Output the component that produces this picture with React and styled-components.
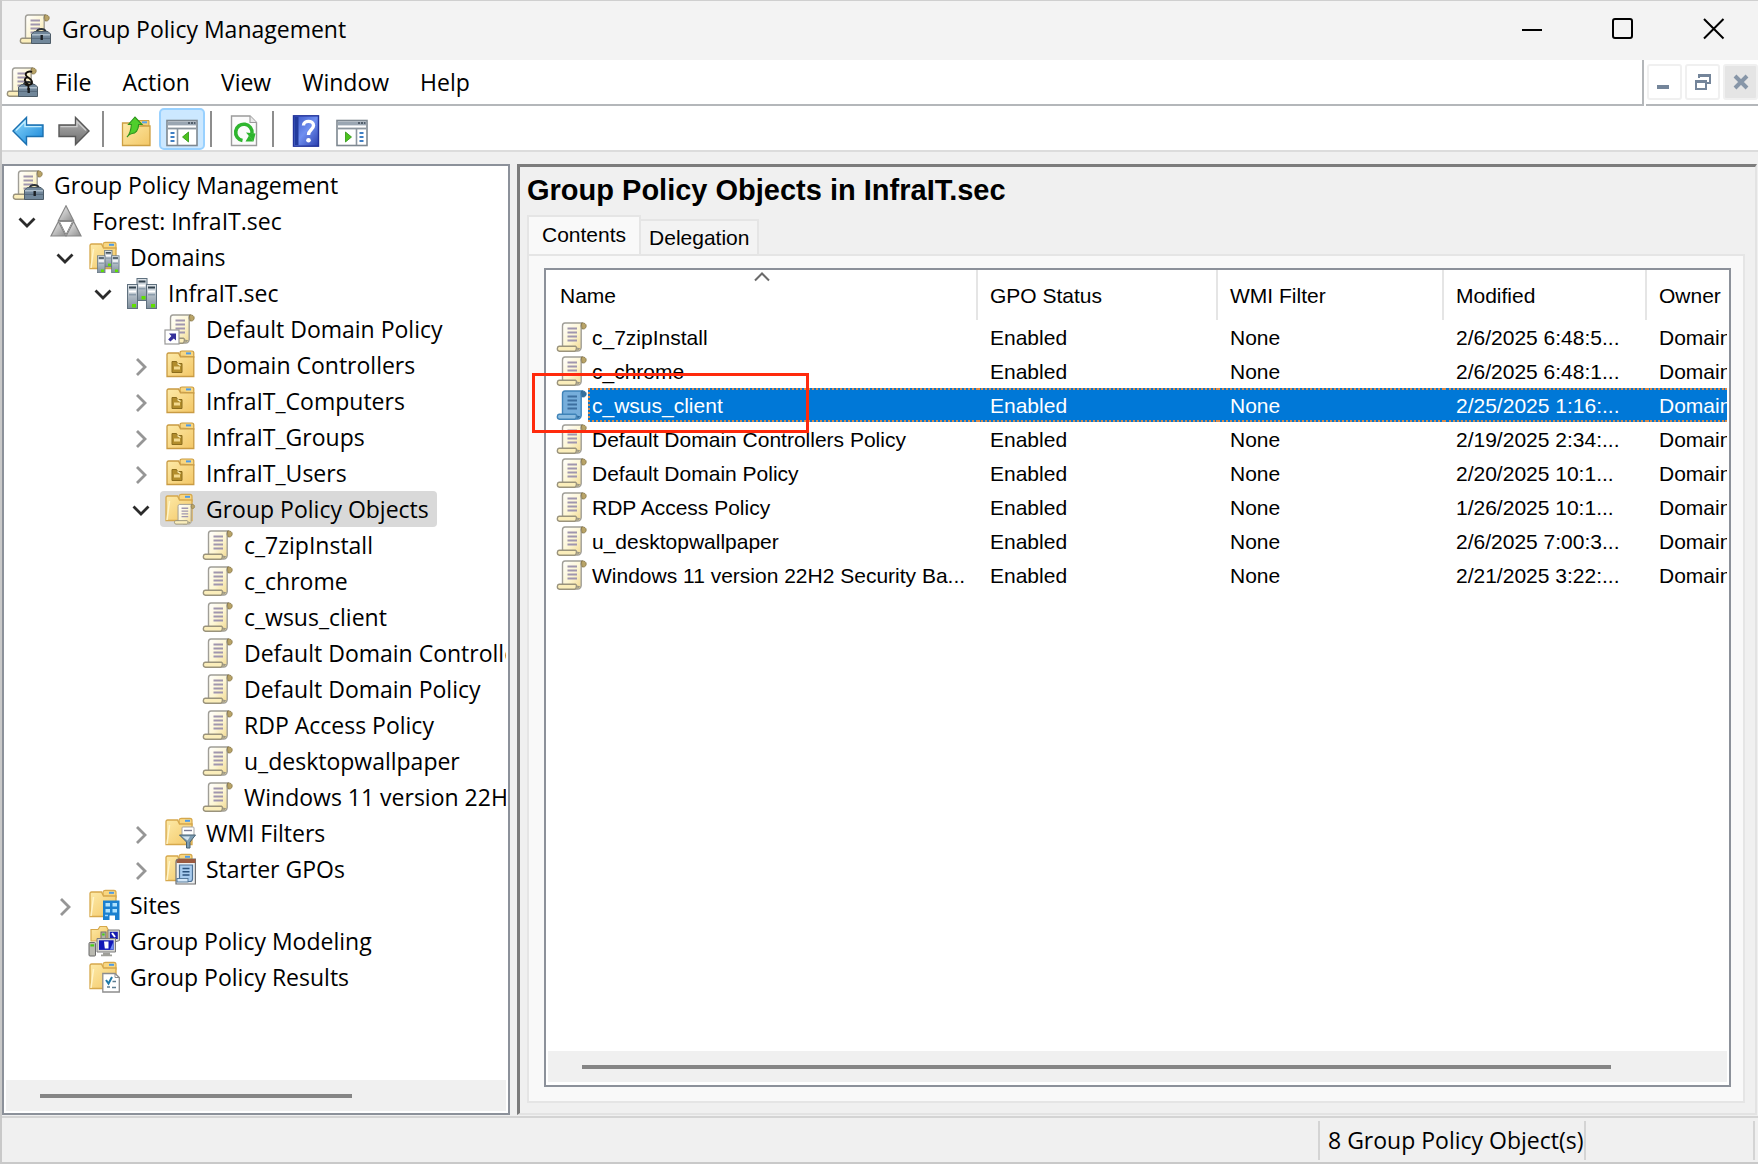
import React from "react";
import styled, { createGlobalStyle } from "styled-components";

const SEGOE = `"Open Sans", "Noto Sans", sans-serif`;
const LIST = `"Liberation Sans", Arial, sans-serif`;

const GlobalStyle = createGlobalStyle`
  *, *::before, *::after { box-sizing: border-box; }
  body { margin: 0; background: #f0f0f0; color: #000; font-family: ${SEGOE}; }
  button { margin: 0; padding: 0; border: 0; background: none; color: inherit; font: inherit; text-align: left; }
  svg { display: block; flex: none; }
`;

/* ---------- window frame ---------- */

const Window = styled.div`
  display: flex;
  flex-direction: column;
  min-height: 100vh;
  border-top: 1px solid #cfcfcf;
  border-left: 2px solid #c9c9c9;
  border-bottom: 2px solid #c9c9c9;
  background: #f0f0f0;
  font-size: 23px;
  line-height: 32px;
`;

const TitleBar = styled.header`
  display: flex;
  align-items: center;
  gap: 11px;
  height: 59px;
  padding: 0 0 3px 17px;
  background: #f3f3f3;
`;

const Title = styled.h1`
  flex: 1;
  margin: 0;
  font-size: 23px;
  font-weight: 400;
  line-height: 32px;
`;

const CaptionButton = styled.button`
  display: flex;
  align-items: center;
  justify-content: center;
  width: 80px;
  height: 56px;
`;

const CaptionGroup = styled.div`
  display: flex;
  gap: 11px;
  padding-right: 4px;
`;

const MenuRow = styled.div`
  display: flex;
  height: 46px;
  background: #fff;
`;

const MenuBar = styled.nav`
  display: flex;
  align-items: center;
  flex: 1;
  gap: 17px;
  padding-left: 4px;
  border-right: 2px solid #b4b7ba;
  border-bottom: 2px solid #b4b7ba;
`;

const MenuItems = styled.div`
  display: flex;
  gap: 31px;
`;

const MenuButton = styled.button`
  line-height: 32px;
`;

const ChildControls = styled.div`
  display: flex;
  align-items: center;
  gap: 3px;
  margin-left: 2px;
  padding-left: 1px;
  border-bottom: 2px solid #b4b7ba;
`;

const ChildButton = styled.button`
  display: flex;
  align-items: center;
  justify-content: center;
  width: 35px;
  height: 36px;
  border: 2px solid #f0f0f0;
  border-radius: 3px;
  background: ${(p) => (p.$dim ? "#e5e5e5" : "#fff")};
`;

/* ---------- toolbar ---------- */

const Toolbar = styled.div`
  display: flex;
  align-items: center;
  height: 46px;
  padding: 2px 0 0 3px;
  border-bottom: 2px solid #dcdcdc;
  background: #fff;
`;

const ToolButton = styled.button`
  display: flex;
  align-items: center;
  justify-content: center;
  width: 46px;
  height: 42px;
  padding-top: 3px;
  border: 2px solid ${(p) => (p.$on ? "#99d1ff" : "transparent")};
  border-radius: 5px;
  background: ${(p) => (p.$on ? "#cce8ff" : "transparent")};
`;

const ToolDivider = styled.span`
  width: 2px;
  height: 36px;
  margin: 0 9px 0 5px;
  background: #8d8d8d;
`;

/* ---------- main split ---------- */

const Split = styled.main`
  display: grid;
  flex: 1;
  grid-template-columns: 508px minmax(0, 1fr);
  gap: 7px;
  padding: 12px 1px 0 0;
`;

const TreePane = styled.section`
  display: flex;
  flex-direction: column;
  min-width: 0;
  padding: 1px 2px 2px;
  border: 2px solid #8c919a;
  background: #fff;
`;

const Tree = styled.ul`
  flex: 1;
  min-width: 0;
  margin: 0;
  padding: 0;
  overflow: hidden;
  list-style: none;
`;

const TreeRow = styled.li`
  display: flex;
  height: 36px;
  padding-left: ${(p) => 2 + 38 * Math.max(0, p.$level - 1)}px;
`;

const Twisty = styled.button`
  display: flex;
  align-items: center;
  justify-content: center;
  flex: none;
  width: 38px;
  height: 36px;
  padding-top: ${(p) => (p.$open ? 2 : 4)}px;
`;

const TwistySpace = styled.span`
  flex: none;
  width: 38px;
`;

const TreeItem = styled.button`
  display: flex;
  align-items: center;
  gap: 10px;
  height: 36px;
  padding: 0 8px 0 4px;
  border-radius: 4px;
  background: ${(p) => (p.$selected ? "#d9d9d9" : "transparent")};
  line-height: 32px;
  white-space: nowrap;
`;

const ScrollTrack = styled.div`
  display: flex;
  align-items: center;
  height: 31px;
  padding-left: 34px;
  background: #f0f0f0;
`;

const ScrollThumb = styled.span`
  width: ${(p) => p.$length};
  height: 4px;
  background: #858585;
`;

/* ---------- result pane ---------- */

const ResultPane = styled.section`
  display: flex;
  flex-direction: column;
  min-width: 0;
  padding: 6px 10px 10px 7px;
  border-top: 3px solid #7c7c7c;
  border-left: 3px solid #7c7c7c;
  border-right: 2px solid #e3e3e3;
  border-bottom: 2px solid #e3e3e3;
  font-family: ${LIST};
`;

const PaneHeading = styled.h2`
  margin: 0;
  font-size: 29px;
  font-weight: 700;
  line-height: 34px;
`;

const TabStrip = styled.div`
  display: flex;
  align-items: flex-end;
  height: 47px;
  padding-top: 8px;
`;

const Tab = styled.button`
  height: ${(p) => (p.$active ? 41 : 35)}px;
  margin-bottom: ${(p) => (p.$active ? -2 : 0)}px;
  padding: 0 ${(p) => (p.$active ? 13 : 8)}px ${(p) => (p.$active ? 3 : 0)}px;
  border: 2px solid #e5e5e5;
  border-bottom-width: 0;
  border-left-width: ${(p) => (p.$active ? 2 : 0)}px;
  background: ${(p) => (p.$active ? "#f9f9f9" : "#f3f3f3")};
  font-size: 21px;
  line-height: 28px;
`;

const TabPage = styled.div`
  display: flex;
  flex: 1;
  padding: 12px 12px 14px 15px;
  border: 2px solid #e5e5e5;
  background: #f9f9f9;
`;

const ListFrame = styled.div`
  position: relative;
  display: flex;
  flex: 1;
  flex-direction: column;
  min-width: 0;
  padding: 0 2px 3px 2px;
  border: 2px solid #8c919a;
  background: #fff;
`;

const ListBody = styled.div`
  flex: 1;
  overflow: hidden;
`;

const ListTable = styled.table`
  width: 100%;
  table-layout: fixed;
  border-collapse: separate;
  border-spacing: 0;
  font-size: 21px;
  line-height: 28px;
`;

const Col = styled.col`
  width: ${(p) => p.$width};
`;

const HeadCell = styled.th`
  position: relative;
  height: 50px;
  padding: 2px 0 0 12px;
  border-right: 2px solid ${(p) => (p.$last ? "transparent" : "#e5e5e5")};
  font-weight: 400;
  text-align: left;
  white-space: nowrap;
`;

const SortMark = styled.span`
  position: absolute;
  top: 1px;
  left: 50%;
  margin-left: -9px;
`;

const Cell = styled.td`
  height: 34px;
  padding: ${(p) => (p.$first ? "0 0 0 8px" : "2px 0 0 12px")};
  overflow: hidden;
  white-space: nowrap;
`;

const Row = styled.tr`
  color: ${(p) => (p.$selected ? "#fff" : "#000")};
  ${Cell}:not(:first-child) {
    background: ${(p) => (p.$selected ? "#0078d7" : "transparent")};
    border-top: ${(p) => (p.$selected ? "2px dotted #d98a4a" : "0")};
    border-bottom: ${(p) => (p.$selected ? "2px dotted #d98a4a" : "0")};
  }
`;

const NameCell = styled.div`
  display: flex;
  align-items: center;
  height: 34px;
`;

const NameLabel = styled.span`
  flex: 1;
  height: 34px;
  padding-left: 2px;
  border: 2px dotted ${(p) => (p.$selected ? "#d98a4a" : "transparent")};
  border-right: 0;
  background: ${(p) => (p.$selected ? "#0078d7" : "transparent")};
  line-height: 32px;
`;

const Callout = styled.div`
  position: absolute;
  top: 103px;
  left: -14px;
  width: 277px;
  height: 60px;
  border: 3px solid #ff2a0c;
  pointer-events: none;
`;

/* ---------- status bar ---------- */

const StatusBar = styled.footer`
  display: flex;
  justify-content: flex-end;
  height: 46px;
  margin-top: 1px;
  padding: 3px 3px 2px 0;
  border-top: 2px solid #d4d4d4;
`;

const StatusCell = styled.div`
  width: ${(p) => p.$width}px;
  padding: 3px 0 0 8px;
  border-left: ${(p) => (p.$first ? 2 : 0)}px solid #d4d4d4;
  border-right: 2px solid #d4d4d4;
  line-height: 32px;
  white-space: nowrap;
`;

/* ---------- icons ---------- */

const Defs = () => (
  <svg width="0" height="0" style={{ position: "absolute" }} aria-hidden="true">
    <defs>
      <linearGradient id="paper" x1="0" y1="0" x2="1" y2="1">
        <stop offset="0" stopColor="#ffffff" />
        <stop offset="0.5" stopColor="#fdf6d4" />
        <stop offset="1" stopColor="#f0d689" />
      </linearGradient>
      <linearGradient id="folder" x1="0" y1="0" x2="1" y2="1">
        <stop offset="0" stopColor="#fdeaa8" />
        <stop offset="1" stopColor="#f3c766" />
      </linearGradient>
      <linearGradient id="steel" x1="0" y1="0" x2="0" y2="1">
        <stop offset="0" stopColor="#dfe5ea" />
        <stop offset="1" stopColor="#7f8f9d" />
      </linearGradient>
      <linearGradient id="blueArrow" x1="0" y1="0" x2="1" y2="1">
        <stop offset="0" stopColor="#8fdcff" />
        <stop offset="1" stopColor="#1583d6" />
      </linearGradient>
      <linearGradient id="grayArrow" x1="0" y1="0" x2="0" y2="1">
        <stop offset="0" stopColor="#b5b5b5" />
        <stop offset="1" stopColor="#6c6c6c" />
      </linearGradient>
      <linearGradient id="helpBlue" x1="0" y1="0" x2="1" y2="1">
        <stop offset="0" stopColor="#3a55c4" />
        <stop offset="0.5" stopColor="#6f8ff0" />
        <stop offset="1" stopColor="#2a3fae" />
      </linearGradient>
      <linearGradient id="gray3d" x1="0" y1="0" x2="1" y2="1">
        <stop offset="0" stopColor="#f4f4f4" />
        <stop offset="1" stopColor="#8e8e8e" />
      </linearGradient>
    </defs>
  </svg>
);

const Icon = ({ children }) => (
  <svg width="32" height="32" viewBox="0 0 32 32" aria-hidden="true">
    {children}
  </svg>
);

const ScrollArt = ({ tint }) => {
  const edge = tint ? "#3f83b8" : "#a09e97";
  const fill = tint ? "#76aedb" : "url(#paper)";
  return (
    <g>
      <path d="M9 2H27C24.6 2.6 24.5 5 25.2 7V26.5C25 29 23.5 30 21.5 30H14L6.5 25V5C6.5 3 7.5 2 9 2Z" fill={fill} stroke={edge} strokeWidth="1.4" />
      <path d="M25.5 2C28.5 1.6 30.4 3 30.2 5.2C30 7.6 28 8.4 26 7.8L25.6 5Z" fill={tint ? "#35709e" : "#b9a468"} stroke={tint ? "#2d668f" : "#857545"} strokeWidth="0.8" />
      <path d="M11.5 7.5H21M11.5 11.5H21M11.5 15.5H21M11.5 19.5H21" stroke={tint ? "#3c6fa0" : "#a096ae"} strokeWidth="1.8" />
      <path d="M3 25.2H19.5C21 25.4 20.6 29.6 18.8 30.2H3.4C0.6 29.8 0.8 25.6 3 25.2Z" fill={tint ? "#8bbce0" : "#fbeebb"} stroke={tint ? "#3f83b8" : "#9a937c"} strokeWidth="1.4" />
      <path d="M21 26.4L24.6 27.4L21.4 29.8Z" fill={tint ? "#2f6c9e" : "#9b9785"} />
    </g>
  );
};

const FolderArt = () => (
  <g>
    <path d="M15 7V3.5C15 2 16 1.3 17.5 1.3H26C27.4 1.3 28 2 28 3.5V8Z" fill="#f8d680" stroke="#d6a84c" strokeWidth="1.2" />
    <rect x="21" y="2.8" width="5" height="2" fill="#4d9be8" />
    <path d="M2 4.5C2 3.5 2.6 3 3.6 3H13.5L15.5 7H28V27.5H2Z" fill="url(#folder)" stroke="#d6a84c" strokeWidth="1.3" />
    <path d="M3 27L5.5 8" stroke="#fff4c9" strokeWidth="1.5" />
  </g>
);

const Toolbox = () => (
  <g>
    <path d="M17.5 20C17.5 14.5 27 14.5 27 20" fill="none" stroke="#2d3338" strokeWidth="2" />
    <path d="M12.5 21L15.5 18.5H29L31.5 21V30.5H12.5Z" fill="#71879a" stroke="#4d5c68" strokeWidth="1" />
    <path d="M13 21.8H31" stroke="#b9c8d4" strokeWidth="1.3" />
    <path d="M13 25.4H31" stroke="#56697a" strokeWidth="1" />
    <rect x="21.5" y="22" width="2.4" height="5" fill="#1c2024" />
  </g>
);

const ConsoleRootIcon = ({ dark }) => (
  <Icon>
    <ScrollArt />
    <Toolbox />
    {dark && (
      <path d="M26 6C23 4.6 18.6 6.6 20 9.4C21.2 12 26.6 13 26 16.4C25.6 19 21 20 19 18M22 11C17 12.6 18.4 16 22.4 18.4V24" fill="none" stroke="#14110c" strokeWidth="1.8" />
    )}
  </Icon>
);

const ForestIcon = () => (
  <Icon>
    <path d="M16 0.8L23.6 15.6H8.4Z" fill="url(#gray3d)" stroke="#868686" strokeWidth="1.2" />
    <path d="M8.4 16.5L15.8 31H1Z" fill="url(#gray3d)" stroke="#868686" strokeWidth="1.2" />
    <path d="M23.6 16.5L31 31H16.2Z" fill="url(#gray3d)" stroke="#868686" strokeWidth="1.2" />
    <path d="M9.4 16.5H22.6L16 29.5Z" fill="#fff" stroke="#8c8c8c" strokeWidth="1" />
  </Icon>
);

const Server = ({ x, y, h = 22 }) => (
  <g transform={`translate(${x} ${y})`}>
    <rect x="0.5" y="0.5" width="10" height={h} fill="url(#steel)" stroke="#5f707e" />
    <rect x="2" y="2.5" width="7" height="2" fill="#33434f" />
    <rect x="2" y="6.5" width="7" height="2" fill="#fff" />
    <rect x="2" y="10" width="7" height="1.5" fill="#8b9cab" />
    <rect x="5" y={h - 4} width="4" height="3.5" fill="#5fe000" />
  </g>
);

const DomainIcon = () => (
  <Icon>
    <Server x={10.5} y={1} />
    <Server x={1} y={7} h={24} />
    <Server x={20} y={7} h={24} />
  </Icon>
);

const DomainsIcon = () => (
  <Icon>
    <FolderArt />
    <g transform="translate(8.5 8.5) scale(0.74)">
      <Server x={10.5} y={1} />
      <Server x={1} y={8} h={23} />
      <Server x={20} y={8} h={23} />
    </g>
  </Icon>
);

const LinkIcon = () => (
  <Icon>
    <ScrollArt />
    <rect x="1" y="17" width="14" height="14" fill="#fff" stroke="#9a9a9a" strokeWidth="1.2" />
    <path d="M5 20.5H12V27.5L9.8 25.4L6.4 28.6L4.2 26.4L7.4 23Z" fill="#35309a" />
  </Icon>
);

const OuIcon = () => (
  <Icon>
    <path d="M16 7V4C16 2.6 16.8 2 18 2H28C29.3 2 29.8 2.6 29.8 4V8Z" fill="#f8d680" stroke="#c99b43" strokeWidth="1.2" />
    <rect x="22" y="3.4" width="5" height="2" fill="#4d9be8" />
    <path d="M3 5.5C3 4.5 3.6 4 4.6 4H14.5L16.5 7.8H29.8V27.5H3Z" fill="url(#folder)" stroke="#c99b43" strokeWidth="1.3" />
    <path d="M8 12.5H12.5L13.5 14.5H18V23.5H8Z" fill="#b28d2c" stroke="#8b6c1c" strokeWidth="1" />
    <rect x="10" y="17.5" width="6" height="3" fill="#f3d98c" />
    <path d="M13.5 14.5L16.5 16.5" stroke="#fff3bf" strokeWidth="1.4" />
  </Icon>
);

const GpoFolderIcon = () => (
  <Icon>
    <FolderArt />
    <g transform="translate(9.5 10) scale(0.7)">
      <ScrollArt />
    </g>
  </Icon>
);

const GpoIcon = ({ tint }) => (
  <Icon>
    <ScrollArt tint={tint} />
  </Icon>
);

const WmiIcon = () => (
  <Icon>
    <FolderArt />
    <rect x="18" y="10" width="12" height="9" rx="1" fill="#fff" stroke="#a5a5a5" />
    <path d="M20 13.5H28" stroke="#7a7a92" strokeWidth="1.4" />
    <path d="M15.5 18H31.5L26 25V31H22.5V25Z" fill="#7d9db3" stroke="#466173" strokeWidth="1" />
    <path d="M18 19.5H26L23.6 23.5Z" fill="#d3e4ef" />
  </Icon>
);

const StarterIcon = () => (
  <Icon>
    <FolderArt />
    <path d="M12 9C12 6.8 13 6 15 6H31.4V31H12Z" fill="#eceff1" stroke="#6f6f6f" strokeWidth="1.2" />
    <path d="M12.6 8.5C13 6.8 14 6 15 6H31.4V10H12.6Z" fill="#9b5a40" />
    <path d="M15.5 12H28.5V26C28.5 27.8 27.6 28.5 26 28.5H15.5Z" fill="#a8cbee" stroke="#4d7196" strokeWidth="1.2" />
    <path d="M18.5 15.5H25.5M18.5 18.7H25.5M18.5 22H25.5" stroke="#2b527c" strokeWidth="1.5" />
    <rect x="13" y="25.5" width="11" height="3.5" fill="#d4e7f8" stroke="#4d7196" strokeWidth="0.9" />
  </Icon>
);

const SitesIcon = () => (
  <Icon>
    <FolderArt />
    <rect x="15" y="11.5" width="16.5" height="19.5" fill="#1b80cf" />
    <path d="M17.5 14H22V17.5H17.5ZM24.5 14H29V17.5H24.5ZM17.5 20H22V23.5H17.5ZM24.5 20H29V23.5H24.5Z" fill="#aee2ff" />
    <path d="M21.5 26.5H27V31H21.5Z" fill="#fff" />
    <path d="M17 26.5H20" stroke="#9bd4ff" strokeWidth="1.5" />
  </Icon>
);

const ModelingIcon = () => (
  <Icon>
    <path d="M3 4.5H10L12 1.5H18.5L20 4.5V16H3Z" fill="url(#folder)" stroke="#d6a84c" strokeWidth="1.2" />
    <rect x="13" y="7" width="5" height="9" fill="#b0b0a6" stroke="#6f6f6f" />
    <rect x="14.2" y="8.5" width="2.4" height="2" fill="#46d010" />
    <path d="M20 5H31.5V15.5L27 17H20Z" fill="#d6d6d0" stroke="#7d7d7d" />
    <path d="M21.8 6.8H29.8V14H21.8Z" fill="#151bb0" />
    <path d="M24 8L27 12" stroke="#fff" strokeWidth="2" />
    <path d="M9 13.5H27.5V27H9Z" fill="#d6d6d0" stroke="#7d7d7d" />
    <rect x="11" y="15.3" width="14.6" height="9.6" fill="#1219b8" />
    <path d="M16 16.5H20.5V23.5H16.8Z" fill="#fff" />
    <path d="M22 24.5L25.4 17V24.5Z" fill="#6d8ef2" />
    <path d="M15 27.5H22V29.5H24V31.3H13V29.5H15Z" fill="#9f9f99" />
    <rect x="1" y="17.5" width="6.5" height="13.5" rx="1" fill="#b9b9b0" stroke="#6b6b6b" />
    <rect x="2.4" y="19.3" width="3.7" height="2.2" fill="#46d010" />
  </Icon>
);

const ResultsIcon = () => (
  <Icon>
    <FolderArt />
    <path d="M14.8 12.5H27L31.3 16.5V31H14.8Z" fill="#fff" stroke="#8d8d8d" strokeWidth="1.3" />
    <path d="M27 12.5V16.5H31.3" fill="none" stroke="#8d8d8d" />
    <path d="M18 19L20.5 22.5L24 16" fill="none" stroke="#1e79a8" strokeWidth="2" />
    <path d="M24.5 20.5H28M19 26H22M24 26.5H28" stroke="#5c7c90" strokeWidth="1.5" />
  </Icon>
);

const BackIcon = () => (
  <Icon>
    <path d="M1 16L14.5 2.5V10H31V21.5H14.5V29.5Z" fill="url(#blueArrow)" stroke="#1b70b0" strokeWidth="1.4" />
    <path d="M4 15.5L13 6.5V11.6H29.5" fill="none" stroke="#c2edff" strokeWidth="1.4" />
  </Icon>
);

const ForwardIcon = () => (
  <Icon>
    <path d="M31 16L17.5 2.5V10H1V21.5H17.5V29.5Z" fill="url(#grayArrow)" stroke="#585858" strokeWidth="1.4" />
    <path d="M2.5 11.6H19V6.5L28 15.5" fill="none" stroke="#cdcdcd" strokeWidth="1.3" />
  </Icon>
);

const UpFolderIcon = () => (
  <Icon>
    <path d="M17 9V5.5H29V12Z" fill="#f4cf78" stroke="#cc9f43" />
    <rect x="22" y="6.3" width="5" height="2" fill="#5aa5ea" />
    <path d="M2.5 8H15L17 11H30V30.5H2.5Z" fill="url(#folder)" stroke="#cc9f43" strokeWidth="1.3" />
    <path d="M7 22C10 19 11 15 11.4 9.5H8.5L15 2L22 9.5H18.6C18.6 15 15.5 18.5 12 18.5C10 18.8 8.5 20 7 22Z" fill="#4fce2c" stroke="#2c941c" strokeWidth="1.1" />
  </Icon>
);

const PaneIcon = ({ flip }) => (
  <Icon>
    <rect x="1" y="5.5" width="30" height="25" fill="#fff" stroke="#7d8790" strokeWidth="1.6" />
    <rect x="2" y="6.4" width="28" height="4" fill="#9aa6b2" />
    <path d="M22 8H24M25 8H27M28 8H29.4" stroke="#3c4854" strokeWidth="1.5" />
    <path d="M2 13.5H30" stroke="#8b959e" strokeWidth="1.8" />
    <g transform={flip ? "translate(32 0) scale(-1 1)" : undefined}>
      <path d="M11.5 14V30" stroke="#8b959e" strokeWidth="1.6" />
      <path d="M4.5 18H8.5M4.5 22H8.5M4.5 26H8.5" stroke="#3f7fc4" strokeWidth="1.8" />
      <path d="M22.5 17V27L16.5 22Z" fill="#4cc21e" stroke="#2a9410" strokeWidth="0.8" />
    </g>
  </Icon>
);

const RefreshIcon = () => (
  <Icon>
    <path d="M3.5 1H22L28.5 7.5V30.5H3.5Z" fill="#fbfbfb" stroke="#9b9b9b" strokeWidth="1.4" />
    <path d="M22 1V7.5H28.5" fill="#e8e8e8" stroke="#9b9b9b" strokeWidth="1.1" />
    <path d="M14.5 25.5A8.2 8.2 0 1 1 24 18.5" fill="none" stroke="#2eb52e" strokeWidth="3.6" />
    <path d="M18 17.5L27.5 18.5L25.5 26.5Z" fill="#2eb52e" />
    <path d="M17.5 26.5H25.5L21 20.5Z" fill="#2eb52e" />
  </Icon>
);

const HelpIcon = () => (
  <Icon>
    <rect x="3.5" y="0.8" width="25" height="30.4" fill="url(#helpBlue)" stroke="#22339b" strokeWidth="1.4" />
    <rect x="4.5" y="1.8" width="4" height="28.4" fill="#223a9c" />
    <path d="M13.5 10.5C13.5 5 23.5 5 23.5 10.5C23.5 14.5 18.5 14.5 18.5 20" fill="none" stroke="#fff" strokeWidth="3.4" />
    <circle cx="18.5" cy="25.2" r="2.3" fill="#fff" />
  </Icon>
);

const ChevronDown = () => (
  <svg width="20" height="20" viewBox="0 0 20 20" aria-hidden="true">
    <path d="M2.5 6.5L10 14L17.5 6.5" fill="none" stroke="#2b2b2b" strokeWidth="2.8" />
  </svg>
);

const ChevronRight = () => (
  <svg width="20" height="20" viewBox="0 0 20 20" aria-hidden="true">
    <path d="M6 2L14 10L6 18" fill="none" stroke="#969696" strokeWidth="2.8" />
  </svg>
);

/* ---------- data ---------- */

const treeRows = [
  { level: 0, label: "Group Policy Management", icon: ConsoleRootIcon },
  { level: 1, label: "Forest: InfraIT.sec", icon: ForestIcon, state: "open" },
  { level: 2, label: "Domains", icon: DomainsIcon, state: "open" },
  { level: 3, label: "InfraIT.sec", icon: DomainIcon, state: "open" },
  { level: 4, label: "Default Domain Policy", icon: LinkIcon },
  { level: 4, label: "Domain Controllers", icon: OuIcon, state: "closed" },
  { level: 4, label: "InfraIT_Computers", icon: OuIcon, state: "closed" },
  { level: 4, label: "InfraIT_Groups", icon: OuIcon, state: "closed" },
  { level: 4, label: "InfraIT_Users", icon: OuIcon, state: "closed" },
  { level: 4, label: "Group Policy Objects", icon: GpoFolderIcon, state: "open", selected: true },
  { level: 5, label: "c_7zipInstall", icon: GpoIcon },
  { level: 5, label: "c_chrome", icon: GpoIcon },
  { level: 5, label: "c_wsus_client", icon: GpoIcon },
  { level: 5, label: "Default Domain Controllers Policy", icon: GpoIcon },
  { level: 5, label: "Default Domain Policy", icon: GpoIcon },
  { level: 5, label: "RDP Access Policy", icon: GpoIcon },
  { level: 5, label: "u_desktopwallpaper", icon: GpoIcon },
  { level: 5, label: "Windows 11 version 22H2", icon: GpoIcon },
  { level: 4, label: "WMI Filters", icon: WmiIcon, state: "closed" },
  { level: 4, label: "Starter GPOs", icon: StarterIcon, state: "closed" },
  { level: 2, label: "Sites", icon: SitesIcon, state: "closed" },
  { level: 2, label: "Group Policy Modeling", icon: ModelingIcon },
  { level: 2, label: "Group Policy Results", icon: ResultsIcon },
];

const columns = [
  { label: "Name", width: "430px", sorted: true },
  { label: "GPO Status", width: "240px" },
  { label: "WMI Filter", width: "226px" },
  { label: "Modified", width: "203px" },
  { label: "Owner", width: "auto" },
];

const policies = [
  { name: "c_7zipInstall", modified: "2/6/2025 6:48:5..." },
  { name: "c_chrome", modified: "2/6/2025 6:48:1..." },
  { name: "c_wsus_client", modified: "2/25/2025 1:16:...", selected: true },
  { name: "Default Domain Controllers Policy", modified: "2/19/2025 2:34:..." },
  { name: "Default Domain Policy", modified: "2/20/2025 10:1..." },
  { name: "RDP Access Policy", modified: "1/26/2025 10:1..." },
  { name: "u_desktopwallpaper", modified: "2/6/2025 7:00:3..." },
  { name: "Windows 11 version 22H2 Security Ba...", modified: "2/21/2025 3:22:..." },
];

/* ---------- app ---------- */

function TreeNode({ level, label, icon: NodeIcon, state, selected }) {
  return (
    <TreeRow $level={level} role="treeitem" aria-level={level + 1} aria-selected={!!selected}>
      {level > 0 &&
        (state ? (
          <Twisty $open={state === "open"} aria-label={`Toggle ${label}`}>
            {state === "open" ? <ChevronDown /> : <ChevronRight />}
          </Twisty>
        ) : (
          <TwistySpace />
        ))}
      <TreeItem $selected={selected}>
        <NodeIcon />
        {label}
      </TreeItem>
    </TreeRow>
  );
}

export default function App() {
  return (
    <Window>
      <GlobalStyle />
      <Defs />
      <TitleBar>
        <ConsoleRootIcon />
        <Title>Group Policy Management</Title>
        <CaptionGroup>
          <CaptionButton aria-label="Minimize">
            <svg width="22" height="22" viewBox="0 0 22 22">
              <path d="M1 12H21" stroke="#000" strokeWidth="2" />
            </svg>
          </CaptionButton>
          <CaptionButton aria-label="Maximize">
            <svg width="22" height="22" viewBox="0 0 22 22">
              <rect x="1" y="1" width="19" height="19" rx="2" fill="none" stroke="#000" strokeWidth="2" />
            </svg>
          </CaptionButton>
          <CaptionButton aria-label="Close">
            <svg width="22" height="22" viewBox="0 0 22 22">
              <path d="M1 1L20.5 20.5M20.5 1L1 20.5" stroke="#000" strokeWidth="2" />
            </svg>
          </CaptionButton>
        </CaptionGroup>
      </TitleBar>

      <MenuRow>
        <MenuBar aria-label="Menu">
          <ConsoleRootIcon dark />
          <MenuItems>
            {["File", "Action", "View", "Window", "Help"].map((item) => (
              <MenuButton key={item}>{item}</MenuButton>
            ))}
          </MenuItems>
        </MenuBar>
        <ChildControls>
          <ChildButton aria-label="Minimize child window">
            <svg width="20" height="20" viewBox="0 0 20 20">
              <rect x="2" y="13" width="12" height="4" fill="#74859a" />
            </svg>
          </ChildButton>
          <ChildButton aria-label="Restore child window">
            <svg width="20" height="20" viewBox="0 0 20 20">
              <path d="M6 6V3H17V11H14" fill="none" stroke="#74859a" strokeWidth="2" />
              <path d="M5 3.5H18" stroke="#74859a" strokeWidth="3" />
              <rect x="3" y="9" width="10" height="8" fill="#fff" stroke="#74859a" strokeWidth="2" />
              <path d="M2 9.5H14" stroke="#74859a" strokeWidth="3" />
            </svg>
          </ChildButton>
          <ChildButton $dim aria-label="Close child window">
            <svg width="18" height="18" viewBox="0 0 18 18">
              <path d="M3 3L15 15M15 3L3 15" stroke="#8796a8" strokeWidth="4" />
            </svg>
          </ChildButton>
        </ChildControls>
      </MenuRow>

      <Toolbar role="toolbar" aria-label="Standard">
        <ToolButton aria-label="Back"><BackIcon /></ToolButton>
        <ToolButton aria-label="Forward"><ForwardIcon /></ToolButton>
        <ToolDivider />
        <ToolButton aria-label="Up one level"><UpFolderIcon /></ToolButton>
        <ToolButton $on aria-label="Show or hide console tree"><PaneIcon /></ToolButton>
        <ToolDivider />
        <ToolButton aria-label="Refresh"><RefreshIcon /></ToolButton>
        <ToolDivider />
        <ToolButton aria-label="Help"><HelpIcon /></ToolButton>
        <ToolButton aria-label="Show or hide action pane"><PaneIcon flip /></ToolButton>
      </Toolbar>

      <Split>
        <TreePane aria-label="Console tree">
          <Tree role="tree">
            {treeRows.map((row, i) => (
              <TreeNode key={i} {...row} />
            ))}
          </Tree>
          <ScrollTrack>
            <ScrollThumb $length="312px" />
          </ScrollTrack>
        </TreePane>

        <ResultPane>
          <PaneHeading>Group Policy Objects in InfraIT.sec</PaneHeading>
          <TabStrip role="tablist">
            <Tab $active role="tab" aria-selected="true">Contents</Tab>
            <Tab role="tab" aria-selected="false">Delegation</Tab>
          </TabStrip>
          <TabPage role="tabpanel">
            <ListFrame>
              <ListBody>
                <ListTable>
                  <colgroup>
                    {columns.map((c) => (
                      <Col key={c.label} $width={c.width} />
                    ))}
                  </colgroup>
                  <thead>
                    <tr>
                      {columns.map((c, i) => (
                        <HeadCell key={c.label} $last={i === columns.length - 1}>
                          {c.label}
                          {c.sorted && (
                            <SortMark>
                              <svg width="18" height="11" viewBox="0 0 18 11" aria-hidden="true">
                                <path d="M2 9.5L9 2.5L16 9.5" fill="none" stroke="#6a6a6a" strokeWidth="2" />
                              </svg>
                            </SortMark>
                          )}
                        </HeadCell>
                      ))}
                    </tr>
                  </thead>
                  <tbody>
                    {policies.map((p) => (
                      <Row key={p.name} $selected={p.selected}>
                        <Cell $first>
                          <NameCell>
                            <GpoIcon tint={p.selected} />
                            <NameLabel $selected={p.selected}>{p.name}</NameLabel>
                          </NameCell>
                        </Cell>
                        <Cell>Enabled</Cell>
                        <Cell>None</Cell>
                        <Cell>{p.modified}</Cell>
                        <Cell>Domain Admins</Cell>
                      </Row>
                    ))}
                  </tbody>
                </ListTable>
              </ListBody>
              <ScrollTrack>
                <ScrollThumb $length="calc(100% - 116px)" />
              </ScrollTrack>
              <Callout />
            </ListFrame>
          </TabPage>
        </ResultPane>
      </Split>

      <StatusBar>
        <StatusCell $first $width={268}>8 Group Policy Object(s)</StatusCell>
        <StatusCell $width={169} />
      </StatusBar>
    </Window>
  );
}
